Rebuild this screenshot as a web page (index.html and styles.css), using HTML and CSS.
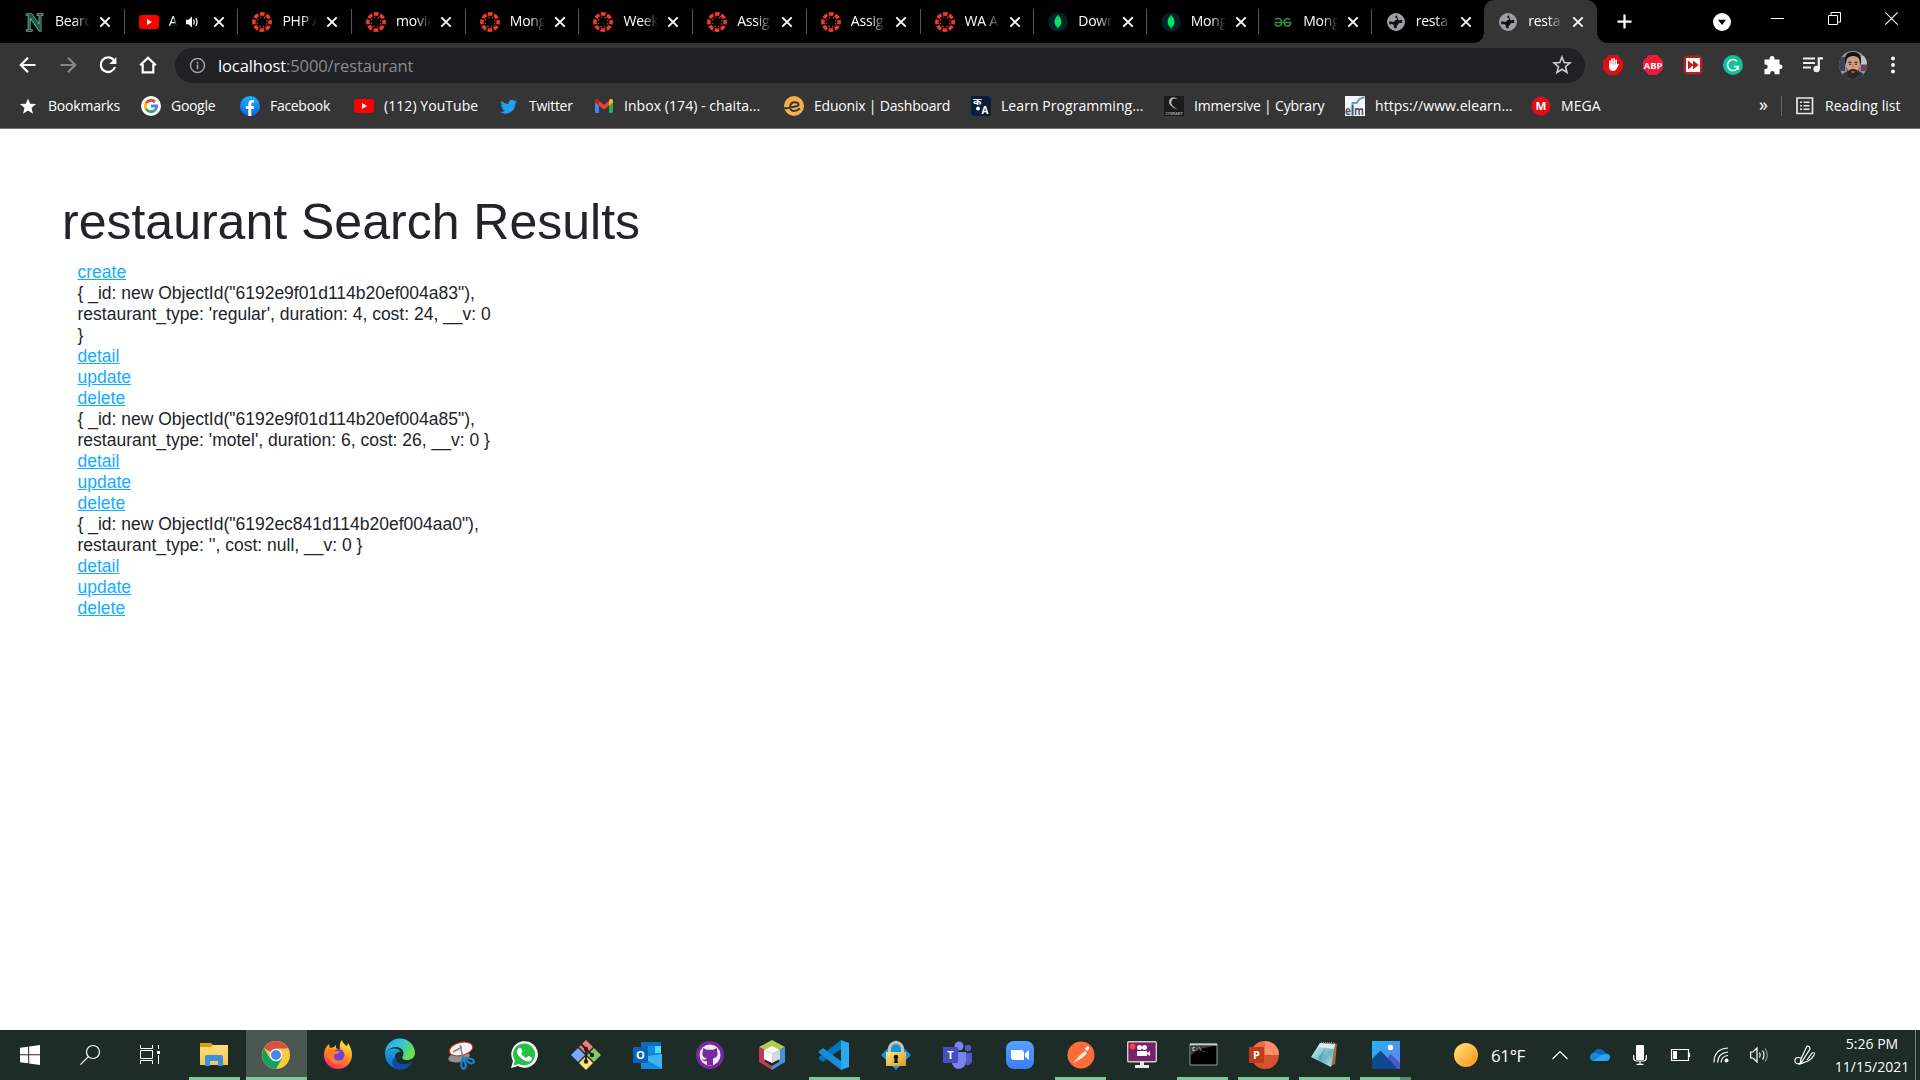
FILE: index.html
```html
<!DOCTYPE html>
<html lang="en">
<head>
<meta charset="utf-8">
<title>restaurant</title>
<link rel="stylesheet" href="styles.css">
</head>
<body>
<svg class="defs" aria-hidden="true">
  <defs>
    <linearGradient id="sun" x1="0" y1="0" x2="1" y2="1"><stop offset="0" stop-color="#ffe680"/><stop offset="1" stop-color="#ff9010"/></linearGradient>
    <linearGradient id="fox" x1=".8" y1="0" x2=".3" y2="1"><stop offset="0" stop-color="#fff04a"/><stop offset=".45" stop-color="#ff9a1e"/><stop offset="1" stop-color="#ff2468"/></linearGradient>
    <linearGradient id="edgeTop" x1="0" y1="0" x2="1" y2=".4"><stop offset="0" stop-color="#2aa5ea"/><stop offset=".5" stop-color="#2fc2df"/><stop offset="1" stop-color="#66e04c"/></linearGradient>
    <linearGradient id="edgeBody" x1="0" y1="0" x2="0" y2="1"><stop offset="0" stop-color="#1fa5e5"/><stop offset="1" stop-color="#0a63c4"/></linearGradient>
    <linearGradient id="zoomBlue" x1="0" y1="0" x2="0" y2="1"><stop offset="0" stop-color="#57a0ff"/><stop offset="1" stop-color="#3a7df8"/></linearGradient>
    <linearGradient id="photoSky" x1="0" y1="0" x2="1" y2="1"><stop offset="0" stop-color="#1cb5f2"/><stop offset="1" stop-color="#6f7ee8"/></linearGradient>
    <linearGradient id="brass" x1="0" y1="0" x2="1" y2="1"><stop offset="0" stop-color="#ffe680"/><stop offset="1" stop-color="#d59a24"/></linearGradient>
    <linearGradient id="pad" x1="0" y1="0" x2="1" y2="1"><stop offset="0" stop-color="#e6f6f6"/><stop offset=".6" stop-color="#67b6c4"/><stop offset="1" stop-color="#c9ecf0"/></linearGradient>
    <linearGradient id="fb" x1="0" y1="0" x2="0" y2="1"><stop offset="0" stop-color="#1fb0ff"/><stop offset="1" stop-color="#0a66e8"/></linearGradient>
    <linearGradient id="folder" x1="0" y1="0" x2="0" y2="1"><stop offset="0" stop-color="#ffe07a"/><stop offset="1" stop-color="#f7c64d"/></linearGradient>
    <clipPath id="avatarClip"><circle cx="14" cy="14" r="14"/></clipPath>
  </defs>
  <symbol id="x" viewBox="0 0 12 12"><path d="M1.3 1.3l9.4 9.4M10.7 1.3l-9.4 9.4" stroke="#fff" stroke-width="1.9"/></symbol>
  <symbol id="canvas" viewBox="0 0 20 20">
    <circle cx="10" cy="10" r="8.1" fill="none" stroke="#ea3b2e" stroke-width="3.6" stroke-dasharray="4.76 1.6" stroke-dashoffset="2.38"/>
    <circle cx="10" cy="10" r="4.9" fill="none" stroke="#ea3b2e" stroke-width="1.3" stroke-dasharray="1.3 2.548" stroke-dashoffset="2.57"/>
  </symbol>
  <symbol id="mongo" viewBox="0 0 20 20"><circle cx="10" cy="10" r="9.8" fill="#04202c"/><path d="M10 2.800c.8 1.600 3.400 3.400 3.400 7.100 0 3-1.800 4.600-3 5.600L10 17.600l-.4-2.100c-1.200-1-3-2.600-3-5.600 0-3.700 2.600-5.500 3.400-7.100z" fill="#00ed64"/><path d="M10 3v14" stroke="#00b04c" stroke-width=".6"/></symbol>
  <symbol id="globe" viewBox="0 0 18 18"><circle cx="9" cy="9" r="8" fill="none" stroke="#9aa0a6" stroke-width="2"/><circle cx="9" cy="9" r="8" fill="#9aa0a6"/><path class="land" d="M9.800 2.200c-1.300.4-1.800 1.300-1.500 2.100.3.900 1.600.6 1.900 1.500.2 1-.9 1.300-1.900 1.400L6.500 9 2.300 8.300c-.3 1.300-.1 2.200.2 3.200 1.200-.1 2.500-.5 3.600.1 1.100.7.300 1.900.8 2.900.6.900 2.200.8 3.300.4-1.300-1-.8-2 .1-2.500 1-.6.700-1.700 1.700-2.200 1-.500 2.300.1 3.300-.4.200-1.200 0-2.400-.5-3.300-1 .9-2.600 1-3.300.2-.7-.9-.9-2.200-1.700-4.500z"/></symbol>
  <symbol id="youtube" viewBox="0 0 20 14"><rect width="20" height="14" rx="3.200" fill="#f00"/><path d="M8 4l5 3-5 3z" fill="#fff"/></symbol>
</svg>

<header class="chrome">
  <div class="tabstrip">
    <div class="tab first"><svg class="fav" viewBox="0 0 20 20"><text class="nlogo" x="1" y="18.500" textLength="17" lengthAdjust="spacingAndGlyphs">N</text></svg><span class="ttl">Bearc</span><svg class="close"><use href="#x"/></svg></div>
    <div class="tab"><svg class="fav"><use href="#youtube" y="3" width="20" height="14"/></svg><span class="ttl short">A</span><svg class="speaker" viewBox="0 0 12 12"><path d="M0 3.700h2.500L6 .6v10.800L2.500 8.300H0z" fill="#fff"/><path d="M7.600 3.500q1.500 2.500 0 5M9.800 2q2.400 4 0 8" fill="none" stroke="#fff" stroke-width="1.300"/></svg><svg class="close"><use href="#x"/></svg></div>
    <div class="tab"><svg class="fav"><use href="#canvas"/></svg><span class="ttl">PHP A</span><svg class="close"><use href="#x"/></svg></div>
    <div class="tab"><svg class="fav"><use href="#canvas"/></svg><span class="ttl">movie</span><svg class="close"><use href="#x"/></svg></div>
    <div class="tab"><svg class="fav"><use href="#canvas"/></svg><span class="ttl">Mong</span><svg class="close"><use href="#x"/></svg></div>
    <div class="tab"><svg class="fav"><use href="#canvas"/></svg><span class="ttl">Week</span><svg class="close"><use href="#x"/></svg></div>
    <div class="tab"><svg class="fav"><use href="#canvas"/></svg><span class="ttl">Assig</span><svg class="close"><use href="#x"/></svg></div>
    <div class="tab"><svg class="fav"><use href="#canvas"/></svg><span class="ttl">Assig</span><svg class="close"><use href="#x"/></svg></div>
    <div class="tab"><svg class="fav"><use href="#canvas"/></svg><span class="ttl">WA A</span><svg class="close"><use href="#x"/></svg></div>
    <div class="tab"><svg class="fav"><use href="#mongo"/></svg><span class="ttl">Down</span><svg class="close"><use href="#x"/></svg></div>
    <div class="tab"><svg class="fav"><use href="#mongo"/></svg><span class="ttl">Mong</span><svg class="close"><use href="#x"/></svg></div>
    <div class="tab"><svg class="fav" viewBox="0 0 20 20"><path d="M2.300 8q.8-1.500 3-1.500 3.200 0 3.200 3.800t-3.200 3.800q-2.600 0-3.300-2.300M17.200 7.700q-.9-1.200-2.700-1.200-3.200 0-3.200 3.800t3.200 3.800q2.900 0 3.100-3.700M1.500 10.400h17" fill="none" stroke="#2f8d46" stroke-width="1.500"/></svg><span class="ttl">Mong</span><svg class="close"><use href="#x"/></svg></div>
    <div class="tab beforeactive"><svg class="fav globe"><use href="#globe"/></svg><span class="ttl">resta</span><svg class="close"><use href="#x"/></svg></div>
    <div class="tab active"><svg class="fav globe"><use href="#globe"/></svg><span class="ttl">resta</span><svg class="close"><use href="#x"/></svg></div>
    <svg class="newtab" viewBox="0 0 16 16"><path d="M8 .5v15M.5 8h15" stroke="#fff" stroke-width="2.400"/></svg>
    <div class="winbtns">
      <svg width="18" height="18" class="tabsearch"><circle cx="9" cy="9" r="9" fill="#fff"/><path d="M5 6.700h8L9 12z" fill="#000"/></svg>
      <svg width="13" height="13"><path d="M0 6.500h13" stroke="#fff"/></svg>
      <svg width="13" height="13"><path d="M.5 3.500h9v9h-9zM3 3V.5h9.500V10H10" fill="none" stroke="#fff"/></svg>
      <svg width="13" height="13"><path d="M.3.300l12.400 12.400M12.700.300L.3 12.700" stroke="#fff" stroke-width="1.100"/></svg>
    </div>
  </div>

  <div class="toolbar">
    <div class="nav">
      <svg viewBox="0 0 20 20"><path d="M17.500 10H3M10 2.700L2.800 10l7.200 7.300" class="ln"/></svg>
      <svg viewBox="0 0 20 20" class="dim"><path d="M2.500 10H17M10 2.700l7.200 7.300-7.200 7.300" class="ln"/></svg>
      <svg viewBox="0 0 20 20"><path d="M15.800 5.200A7.300 7.300 0 1 0 17 12" class="ln"/><path d="M18.400 2v7h-7z" fill="#fff"/></svg>
      <svg viewBox="0 0 20 20"><path d="M2.200 10.300L10 2.700l7.800 7.600M4.700 9v8.400h10.600V9" class="ln"/></svg>
    </div>
    <div class="omnibox">
      <svg class="info" viewBox="0 0 18 18"><circle cx="9" cy="9" r="7.400" fill="none" stroke="#9aa0a6" stroke-width="1.600"/><path d="M9 8v5M9 5v1.800" stroke="#9aa0a6" stroke-width="1.800"/></svg>
      <span class="url"><b>localhost</b>:5000/restaurant</span>
      <svg class="star" viewBox="0 0 20 20"><path d="M10 2l2.200 5.500 5.800.4-4.500 3.800 1.500 5.800-5-3.200-5 3.200 1.500-5.800L2 7.900l5.800-.4z" fill="none" stroke="#cfcfcf" stroke-width="1.600"/></svg>
    </div>
    <div class="exts">
      <svg viewBox="0 0 20 20"><path d="M6 0h8l6 6v8l-6 6H6l-6-6V6z" fill="#e30b13"/><path d="M7 6v6M9 4v7M11.100 3.700v7M13.200 5.200v6" stroke="#fff" stroke-width="1.600" stroke-linecap="round"/><path d="M6.200 9.500H14l1.500-.8q.8.300.3 1.300L13.500 14q-1 2-3.500 2-3.800 0-3.800-4z" fill="#fff"/></svg>
      <svg viewBox="0 0 20 20"><path d="M6 0h8l6 6v8l-6 6H6l-6-6V6z" fill="#ee1b3b"/><text class="abp" x=".8" y="13.600" textLength="18.400" lengthAdjust="spacingAndGlyphs">ABP</text></svg>
      <svg viewBox="0 0 20 20"><rect x=".5" y=".5" width="19" height="19" rx="4" fill="#b52020"/><rect x="3" y="3" width="14" height="14" rx="1" fill="#fff"/><path d="M5 5.500l5.500 4.500L5 14.500zM10 5.500l5.700 4.500-5.700 4.500z" fill="#c01a1a"/></svg>
      <svg viewBox="0 0 20 20"><circle cx="10" cy="10" r="10" fill="#11c298"/><path d="M14 6.300A5.500 5.500 0 1 0 15.300 11.500H11M15.300 11v4" fill="none" stroke="#fff" stroke-width="1.500"/></svg>
      <svg viewBox="0 0 20 20"><path d="M1.500 4.500h5.200V3.300a2.400 2.400 0 0 1 4.800 0v1.200h5v5h.7a2.300 2.300 0 0 1 0 4.700h-.7v5h-4.900v-1a2.200 2.200 0 0 0-4.400 0v1H1.500V14h1a2.200 2.200 0 0 0 0-4.500h-1z" fill="#fff"/></svg>
      <svg viewBox="0 0 20 20"><path d="M0 3.500h12M0 8h12M0 12.500h8" stroke="#eee" stroke-width="2"/><path d="M15.800 14V3.400H20" fill="none" stroke="#eee" stroke-width="2.200"/><circle cx="13.600" cy="14" r="3.200" fill="#eee"/></svg>
      <svg class="avatar" viewBox="0 0 28 28"><g clip-path="url(#avatarClip)"><path d="M0 0h28v28H0z" fill="#8e909c"/><path d="M0 6h6v14H0z" fill="#34465a"/><path d="M22 5h6v8h-6z" fill="#c5bec7"/><path d="M22 14h6v6h-6z" fill="#763e52"/><path d="M2 28q1-7 8-8h9q6 1 7 8z" fill="#233448"/><path d="M7.500 8Q8 3.500 14 3.500T20.500 8v11q-2 6-6.500 6t-6.500-6z" fill="#cf9f82"/><path d="M6.300 14Q4 1 14 1t7.700 13l-1.500-6q-2-3-6-3T7.800 8z" fill="#16100f"/><path d="M7.300 15l1 7q2 5.500 5.700 5.500t5.700-5.500l1-7-1.700 5.500q-1-2.500-5-2.500t-5 2.500z" fill="#33211b"/><path d="M11.500 20.800q2.500-1 5 0-2.500 2-5 0z" fill="#bd8270"/><path d="M9.300 11.300h3.200M15.500 11.300h3.200" stroke="#22130f"/><circle cx="11" cy="13.300" r=".8" fill="#22130f"/><circle cx="17" cy="13.300" r=".8" fill="#22130f"/><path d="M14 13v3.500" stroke="#a9775d"/></g></svg>
      <svg viewBox="0 0 20 20"><circle cx="10" cy="3.500" r="1.900" fill="#fff"/><circle cx="10" cy="10" r="1.900" fill="#fff"/><circle cx="10" cy="16.500" r="1.900" fill="#fff"/></svg>
    </div>
  </div>

  <div class="bookmarks">
    <div class="bm starred"><svg viewBox="0 0 20 20"><path d="M8 2.500l2.100 5.200 5.900.4-4.500 3.800 1.500 5.800-5-3.200-5 3.200 1.500-5.800L0 8.100l5.900-.4z" fill="#fff"/></svg><span>Bookmarks</span></div>
    <div class="bm"><svg viewBox="0 0 20 20"><circle cx="10" cy="10" r="10" fill="#fff"/><g fill="none" stroke-width="2.800"><path d="M14 5.900A5.700 5.700 0 0 0 5.100 7.100" stroke="#ea4335"/><path d="M5.100 7.100a5.700 5.700 0 0 0 0 5.800" stroke="#fbbc05"/><path d="M5.100 12.900a5.700 5.700 0 0 0 8.700 1.300" stroke="#34a853"/><path d="M13.800 14.200A5.500 5.500 0 0 0 15.700 10H10" stroke="#4285f4"/></g></svg><span>Google</span></div>
    <div class="bm"><svg viewBox="0 0 20 20"><circle cx="10" cy="10" r="10" fill="url(#fb)"/><path d="M8.300 20v-7H5.800v-3h2.500V7.900c0-2.600 1.500-4 3.900-4 .9 0 1.900.2 1.900.2v2.500h-1.200c-1.300 0-1.600.8-1.600 1.600V10h2.800l-.5 3h-2.300v7z" fill="#fff"/></svg><span>Facebook</span></div>
    <div class="bm loose"><svg><use href="#youtube" y="3" width="20" height="14"/></svg><span>(112) YouTube</span></div>
    <div class="bm"><svg viewBox="0 0 24 24"><path fill="#1da1f2" d="M21.500 6.500c-.7.300-1.500.5-2.300.6.800-.5 1.500-1.300 1.800-2.200-.8.500-1.700.8-2.600 1a4.100 4.100 0 0 0-7 3.700C8 9.500 5 7.900 3 5.400c-1.100 1.900-.5 4.300 1.300 5.500-.7 0-1.300-.2-1.900-.5 0 2 1.400 3.700 3.300 4.100-.6.200-1.200.2-1.900.1.500 1.600 2 2.800 3.900 2.900A8.300 8.300 0 0 1 1.600 19.200 11.600 11.600 0 0 0 19.500 8.900c.8-.6 1.500-1.300 2-2.400z"/></svg><span>Twitter</span></div>
    <div class="bm loose mail"><svg viewBox="0 0 20 20"><path d="M0 5v10.500q0 1.500 1.500 1.500H4V9z" fill="#4285f4"/><path d="M18 5v10.500q0 1.500-1.500 1.500H14V9z" fill="#34a853"/><path d="M14 5.500V9.500L18 6.500V5c0-2-2.200-2.500-3.500-1.500z" fill="#fbbc04"/><path d="M4 5l5 3.800L14 5v4.700l-5 3.800-5-3.800z" fill="#ea4335"/><path d="M0 5c0-2 2-2.500 3.500-1.500L4 4v5.500L0 6.500z" fill="#c5221f"/></svg><span>Inbox (174) - chaita...</span></div>
    <div class="bm mid"><svg viewBox="0 0 20 20"><circle cx="10" cy="10" r="10" fill="#f7ae49"/><path d="M0 12.300h1.500q1.500 0 3-.5l8-1.500c3.500-.8 2.500-4-2-4-5 0-6.500 8.700-.5 8.700 3 0 4-.7 6-2.500" fill="none" stroke="#353535" stroke-width="1.900"/></svg><span>Eduonix | Dashboard</span></div>
    <div class="bm loose"><svg viewBox="0 0 20 20"><path d="M0 0h16q4 0 4 4v16H4q-4 0-4-4z" fill="#0a1e3b"/><text class="glyph" x="2" y="9" font-size="10">क</text><circle cx="7" cy="12.500" r="1.900" fill="#fff"/><text class="glyph" x="10.500" y="18" font-size="10">A</text></svg><span>Learn Programming...</span></div>
    <div class="bm mid"><svg viewBox="0 0 20 20"><path d="M0 0h20v20H0z" fill="#1b1b1b"/><path d="M14.500 3.500Q8-1 5.200 4q-1.800 6 8.300 9.500Q6 9.500 7.500 5 9 1 14.500 3.500z" fill="#bbb"/><text class="cy" x="1.500" y="18.500" textLength="17">CYBRARY</text></svg><span>Immersive | Cybrary</span></div>
    <div class="bm loose"><svg viewBox="0 0 20 20"><path d="M0 0h20v20H0z" fill="#f4f6fa"/><path d="M7.500 20V7h4l3-4 5-2" fill="none" stroke="#7398cf" stroke-width="2"/><text class="elm" x="0" y="18.500" textLength="19" lengthAdjust="spacingAndGlyphs">elm</text></svg><span>https://www.elearn...</span></div>
    <div class="bm loose"><svg viewBox="0 0 20 20"><circle cx="10" cy="10" r="9.500" fill="#e10d17"/><text class="mega" x="4.500" y="14" textLength="11" lengthAdjust="spacingAndGlyphs">M</text></svg><span>MEGA</span></div>
    <span class="more">»</span>
    <div class="bm loose reading"><svg viewBox="0 0 20 20"><path d="M2 2h15.500v15.500H2z" fill="none" stroke="#e8e8e8" stroke-width="1.700"/><path d="M5 6.300h2M8.500 6.300h6M5 9.700h2M8.500 9.700h6M5 13.200h2M8.500 13.200h6" stroke="#e8e8e8" stroke-width="1.500"/></svg><span>Reading list</span></div>
  </div>
</header>

<main class="page">
  <h1>restaurant Search Results</h1>
  <div class="results">
    <a href="#">create</a>
    <p>{ _id: new ObjectId("6192e9f01d114b20ef004a83"),<br>restaurant_type: 'regular', duration: 4, cost: 24, __v: 0<br>}</p>
    <a href="#">detail</a><a href="#">update</a><a href="#">delete</a>
    <p>{ _id: new ObjectId("6192e9f01d114b20ef004a85"),<br>restaurant_type: 'motel', duration: 6, cost: 26, __v: 0 }</p>
    <a href="#">detail</a><a href="#">update</a><a href="#">delete</a>
    <p>{ _id: new ObjectId("6192ec841d114b20ef004aa0"),<br>restaurant_type: '', cost: null, __v: 0 }</p>
    <a href="#">detail</a><a href="#">update</a><a href="#">delete</a>
  </div>
</main>

<footer class="taskbar">
  <div class="system">
    <svg width="20" height="20"><path d="M0 2.800L8.200 1.700v7.600H0zM9.200 1.500L20 0v9.300H9.200zM0 10.300h8.200v7.900L0 17.200zM9.200 10.300H20V20L9.200 18.500z" fill="#fff"/></svg>
    <svg width="20" height="20"><circle cx="13" cy="7" r="6.500" fill="none" stroke="#fff" stroke-width="1.200"/><path d="M8.400 11.600L.4 19.600" stroke="#fff" stroke-width="1.300"/></svg>
    <svg width="20" height="20"><path d="M.5 0v3.500h12V0M.5 19v-3.500h12V19M.5 5.500h12v8H.5zM18.500 0v4M18.500 10v9" fill="none" stroke="#fff"/><path d="M17 6h3v3h-3z" fill="#fff"/></svg>
  </div>
  <div class="apps">
    <div class="app run"><svg viewBox="0 0 30 30"><path d="M1 3h11l2 2v3H1z" fill="#e09a06"/><path d="M1 7h11l2-2h15v20H1z" fill="url(#folder)"/><path d="M6 26V17q0-2 2-2h14q2 0 2 2v9h-5v-5h-8v5z" fill="#3992dc"/></svg></div>
    <div class="app run current"><svg viewBox="0 0 30 30"><circle cx="15" cy="15" r="14" fill="#fbc93c"/><path d="M15 15L2.900 8A14 14 0 0 1 27.100 8z" fill="#d94f44"/><path d="M2.900 8A14 14 0 0 0 14.900 29L21 18.500 15 15 9 18.500z" fill="#16a05d"/><path d="M15 8.500h12.400L21 19z" fill="#fbc93c"/><circle cx="15" cy="15" r="6.300" fill="#fff"/><circle cx="15" cy="15" r="5" fill="#4587f3"/></svg></div>
    <div class="app"><svg viewBox="0 0 30 30"><path d="M1 15Q1 8 6 4l1 4 4-1 2-2 0 3 4 2q-1-7 2-10 1 4 5 6l1-3q4 6 4 12a14 14 0 0 1-28 0z" fill="url(#fox)"/><circle cx="15.500" cy="15" r="6" fill="#7441d4"/><path d="M4 9q5-1 7 2h6q-1 3-5 3-3 3 1 6 5 2 8-1-3 7-10 5-7-3-6-15z" fill="#ff7b20"/></svg></div>
    <div class="app"><svg viewBox="0 0 30 30"><path d="M0 14A15 15 0 0 1 30 13c0 5-4 7-8 7-3 0-6-1-4-4 2-5-2-9-7-9-5 0-9 3-11 7z" fill="url(#edgeTop)"/><path d="M0 14c2-6 13-8 16-2-5-1-7 4-6 8 1 5 6 9 11 8A15 15 0 0 1 0 14z" fill="url(#edgeBody)"/><path d="M11 17c-1 7 8 10 17 4-3 6-8 9-14 9-8-2-9-11-3-13z" fill="#124b9e"/></svg></div>
    <div class="app"><svg viewBox="0 0 30 30"><ellipse cx="12" cy="17" rx="11" ry="5" fill="#929292" transform="rotate(-12 12 17)"/><ellipse cx="14" cy="9" rx="12" ry="6.500" fill="#f4f4f4" stroke="#d32020" transform="rotate(-14 14 9)"/><path d="M6 12l9-5M13 5l3 13 6-1" stroke="#888" fill="none" stroke-width="1.500"/><path d="M16 18q-3 6-1 10 3 2 4-3zM17 18q10 0 10 4-2 3-6 0z" fill="none" stroke="#2380bd" stroke-width="2.200"/></svg></div>
    <div class="app"><svg viewBox="0 0 30 30"><path d="M2 28l2-7A13.300 13.300 0 1 1 9 26z" fill="#fff"/><path d="M4.500 25.500l1.400-5A11 11 0 1 1 9.700 24z" fill="#27c044"/><path d="M9 9q2-3 3.500 0l1 2.500-1.300 2q2 3.500 5 4.500l1.800-2q4 1.200 4 2.200c-1 4-4.500 3.800-8.500 1.800C10 17 8 13.500 8 12q0-1.500 1-3z" fill="#fff"/></svg></div>
    <div class="app"><svg viewBox="0 0 30 30"><path d="M15 0l7 7-7 7-7-7z" fill="#f77b7b"/><path d="M7 8l7 7-7 7-7-7z" fill="#7ba9f9"/><path d="M23 8l7 7-7 7-7-7z" fill="#82ca5a"/><path d="M15 16l7 7-7 7-7-7z" fill="#ffe178"/><path d="M10 4l5 5v13M15 9l6 6" fill="none" stroke="#2b2320" stroke-width="2"/><circle cx="15" cy="9" r="2.200" fill="#2b2320"/><circle cx="15" cy="21.500" r="2.200" fill="#2b2320"/><circle cx="21" cy="15" r="2.200" fill="#2b2320"/></svg></div>
    <div class="app"><svg viewBox="0 0 30 30"><path d="M8 2h20v9H8z" fill="#0f6cbd"/><path d="M15 6h7v7h-7z" fill="#148ade"/><path d="M22 6h6v7h-6z" fill="#50d9ff"/><path d="M8 13h20l1 16H8z" fill="#1480d8"/><path d="M8 17l21 12V14z" fill="#3db5f1"/><path d="M8 17l21 12H8z" fill="#1689df"/><rect x="0" y="7" width="15" height="16" rx="1" fill="#0a63b8"/><text class="office" x="7.500" y="19">O</text></svg></div>
    <div class="app"><svg viewBox="0 0 30 30"><circle cx="15" cy="15" r="14" fill="#772a9e"/><circle cx="15" cy="15" r="10.500" fill="#f1e8f6"/><path d="M12 25v-4q-3.500 1-5-2 3 1.500 5-.5Q6 17 7.700 12l.6-4 3.400 1.800h6.600L21.700 8l.6 4q1.700 5-4.300 6.500V25z" fill="#772a9e"/></svg></div>
    <div class="app"><svg viewBox="0 0 30 30"><path d="M15 0l13 7-13 7L2 7z" fill="#b2ca4e"/><path d="M2 7l6 3v12l7 4v4L2 22z" fill="#be3b58"/><path d="M28 7l-6 3v12l-7 4v4l13-8z" fill="#4b8fd8"/><path d="M15 6l8 4-8 4-8-4z" fill="#f5f5ef"/><path d="M7 10l8 4v9l-8-4z" fill="#fff"/><path d="M23 10l-8 4v9l8-4z" fill="#d5d9dc"/></svg></div>
    <div class="app run"><svg viewBox="0 0 30 30"><path d="M22 0v9L4 22l-4-3v-2z" fill="#0076b9"/><path d="M4 8l18 13v9L0 13v-2z" fill="#168dd5"/><path d="M22 0l8 3v24l-8 3z" fill="#2ba7f3"/></svg></div>
    <div class="app"><svg viewBox="0 0 30 30"><path d="M15 0l15 15-15 15L0 15z" fill="#1792dd"/><path d="M8.500 14V9a6.500 6.500 0 0 1 13 0v5" fill="none" stroke="#c8c4b8" stroke-width="3"/><rect x="5" y="12" width="20" height="14" rx="1" fill="url(#brass)"/><circle cx="15" cy="17" r="2.300" fill="#1b1508"/><path d="M14 17h2l1 6h-4z" fill="#1b1508"/></svg></div>
    <div class="app"><svg viewBox="0 0 30 30"><circle cx="16" cy="6" r="4.500" fill="#7b83eb"/><circle cx="25" cy="8" r="3.200" fill="#5059c9"/><path d="M20 13h9v8q-1 5-6 4z" fill="#5059c9"/><path d="M9 12h14v10q-1 7-8 7-5-1-6-6z" fill="#7b83eb"/><rect x="0" y="7" width="15" height="16" rx="1" fill="#454ebb"/><text class="office" x="7.500" y="19">T</text></svg></div>
    <div class="app"><svg viewBox="0 0 30 30"><rect x="1" y="1" width="28" height="28" rx="8" fill="url(#zoomBlue)"/><path d="M6 10h10q3 0 3 3v7H9q-3 0-3-3zM20 13.500l4-3.500v10l-4-3.500z" fill="#fff"/></svg></div>
    <div class="app run"><svg viewBox="0 0 30 30"><circle cx="15" cy="15" r="13.500" fill="#ff6c37"/><path d="M7 23l8-9 4-3 2 2-5 5zM19 9q2-4 4-2 1 2-2 4z" fill="#fff"/><path d="M8 22.500l11-11" stroke="#ffc4ac"/></svg></div>
    <div class="app"><svg viewBox="0 0 30 30"><rect x=".7" y="1.700" width="28.600" height="20" rx="1" fill="#77206b" stroke="#ccc" stroke-width="1.400"/><circle cx="5.500" cy="6.500" r="3" fill="#ff3a40"/><path d="M10 11h10v5H10zM20 13l3-2v5l-3-2z" fill="#fff"/><circle cx="12.500" cy="7.500" r="2.500" fill="#fff"/><circle cx="17.500" cy="7.500" r="2.500" fill="#fff"/><path d="M13 22h4v3h5v3H8v-3h5z" fill="#e8e8e8"/></svg></div>
    <div class="app run"><svg viewBox="0 0 30 30"><path d="M2 4h27v21H2z" fill="#000" stroke="#929ba0"/><path d="M2 3.500h27v2H2z" fill="#c9d1d5"/><path d="M3 6h25q-20 2-25 10z" fill="#3c3c3c"/><text class="cmd" x="4" y="11">C:\_</text></svg></div>
    <div class="app run"><svg viewBox="0 0 30 30"><circle cx="16" cy="15" r="14" fill="#d35230"/><path d="M16 1a14 14 0 0 1 14 14H16z" fill="#ff8f6b"/><path d="M16 1v14h-9L4 7q5-6 12-6z" fill="#ed6c47"/><rect x="0" y="7" width="15" height="16" rx="1" fill="#c13b1b"/><text class="office" x="7.500" y="19">P</text></svg></div>
    <div class="app run"><svg viewBox="0 0 30 30"><path d="M24 3l3 1-2 20-4 2z" fill="#a3702d"/><path d="M10 3l15 1-4 23L1 17z" fill="url(#pad)"/><path d="M10 3l15 1-1 5-16-2z" fill="#dceced"/><path d="M11 2.500l13 1" stroke="#888" stroke-width="2" stroke-dasharray="1 1"/><path d="M8 18l8-11-5 13z" fill="#398b9b" opacity=".5"/></svg></div>
    <div class="app run multi"><svg viewBox="0 0 30 30"><path d="M1 1h28v28H1z" fill="url(#photoSky)"/><circle cx="19.500" cy="7.500" r="2.700" fill="#fff"/><path d="M17 17l3-3 9 9v6H17z" fill="#4c59c4"/><path d="M1 19l8-8h1l17 18H1z" fill="#10498f"/></svg></div>
  </div>
  <div class="tray">
    <svg class="sun" width="24" height="24"><circle cx="12" cy="12" r="12" fill="url(#sun)"/></svg>
    <span class="temp">61°F</span>
    <div class="trayicons">
      <svg width="16" height="10"><path d="M.5 9L8 1.500 15.500 9" class="thin"/></svg>
      <svg width="20" height="14"><path d="M1 11A5 5 0 0 1 4 4Q7-1 12 1.500 15 3 15.500 5 20 5 20 10z" fill="#0b65bd"/><path d="M0 9q1-5 7-4l9 5-4 3H4q-4 0-4-4z" fill="#1688dc"/><path d="M3 13l8-6q8-3 9 2 0 4-4 4z" fill="#2aa7ec"/></svg>
      <svg width="14" height="20"><rect x="3" y="0" width="8" height="15" rx="1" fill="#fff"/><path d="M.7 10v3q0 3 3 3h6.600q3 0 3-3v-3M7 16v3.300M3.500 19.400h7" class="thin"/></svg>
      <svg width="19" height="12"><path d="M.5.500h17v11H.5zM18.500 4v4" class="thin"/><path d="M2 2h4v8H2z" fill="#fff"/></svg>
      <svg width="16" height="16"><path d="M1 15.500Q1 2 15 1M4.500 15.500Q5 6 15 5M8 15.500Q8.500 9 15 8.500" class="thin"/><circle cx="13.500" cy="13.500" r="2" fill="#fff"/></svg>
      <svg width="21" height="18"><path d="M.6 6H3l4-4v14l-4-4H.600zM9.500 6.500q1.500 2.500 0 5M12.500 4.500q3 4.500 0 9" class="thin"/><path d="M15 2.500q4.500 6.500 0 13" class="thin faint"/></svg>
      <svg width="22" height="20"><path d="M7 13q-7-2-6 4 2 3 6 1l9-14q0-3-3-3L7 14l-1 5 8-3q4-2 6-6 2-3-2-2l-5 7" class="thin"/></svg>
    </div>
    <div class="clock"><span>5:26 PM</span><span>11/15/2021</span></div>
  </div>
</footer>
</body>
</html>
```
FILE: styles.css
```css
* { box-sizing: border-box; }
body {
  margin: 0;
  width: 1920px;
  height: 1080px;
  overflow: hidden;
  display: flex;
  flex-direction: column;
  background: #fff;
  font-family: "Open Sans", "Noto Sans", sans-serif;
}
.defs { position: absolute; width: 0; height: 0; }
svg { flex: none; display: block; overflow: visible; }

.chrome { height: 129px; background: #353535; border-bottom: 1px solid #757575; color: #fff; }

/* Tab strip */
.tabstrip { height: 43px; background: #000; display: flex; align-items: center; padding-left: 11px; }
.tab {
  width: 113.700px;
  height: 25px;
  display: flex;
  align-items: center;
  padding-left: 14px;
  border-right: 1px solid #555;
  flex: none;
}
.tab:nth-child(n+10) { width: 112.500px; }
.fav { width: 20px; height: 20px; margin-right: 10px; }
.fav.globe { width: 18px; height: 18px; margin: 0 11px 0 1px; }
.land { fill: #111; }
.ttl {
  width: 35px;
  white-space: nowrap;
  font-size: 14px;
  line-height: 20px;
  padding-bottom: 2px;
  letter-spacing: -0.200px;
  -webkit-mask-image: linear-gradient(90deg, #000 55%, transparent);
  mask-image: linear-gradient(90deg, #000 55%, transparent);
}
.ttl.short { width: 8px; }
.speaker { width: 12px; height: 12px; margin: 0 5px 0 9px; }
.close { width: 12px; height: 12px; margin-left: 9px; }
.speaker + .close { margin-left: 10px; }
.tab.beforeactive { border-color: transparent; }
.tab.active {
  height: 43px;
  background: #353535;
  border: 0;
  border-radius: 10px 10px 0 0;
  position: relative;
}
.tab.active::before, .tab.active::after {
  content: "";
  position: absolute;
  bottom: 0;
  width: 10px;
  height: 10px;
}
.tab.active::before { left: -10px; background: radial-gradient(circle at 0 0, #000 9.500px, #353535 10px); }
.tab.active::after { right: -10px; background: radial-gradient(circle at 100% 0, #000 9.500px, #353535 10px); }
.tab.active .land { fill: #353535; }
.newtab { width: 15px; height: 15px; margin-left: 20px; }
.winbtns { margin-left: auto; padding: 0 22px 6px 0; display: flex; align-items: center; gap: 44px; height: 43px; }
.tabsearch { margin: 6px -4px 0 0; }

/* Toolbar */
.toolbar { height: 44px; display: flex; align-items: center; }
.nav { display: flex; gap: 20px; padding-left: 17.500px; width: 175px; }
.nav svg { width: 20px; height: 20px; }
.ln { fill: none; stroke: #fff; stroke-width: 2.200; }
.dim { opacity: .4; }
.omnibox {
  width: 1410px;
  height: 35px;
  border-radius: 18px;
  background: #202124;
  display: flex;
  align-items: center;
  padding: 0 13px 0 14px;
}
.info { width: 17px; height: 17px; }
.url { margin-left: 12px; color: #8b8b8b; font-size: 16.500px; letter-spacing: -0.120px; }
.url b { font-weight: 400; color: #fff; }
.star { width: 20px; height: 20px; margin-left: auto; }
.exts { display: flex; align-items: center; gap: 20px; padding-left: 18px; }
.exts svg { width: 20px; height: 20px; }
.exts .avatar { width: 28px; height: 28px; margin: 0 -4px; }

/* Bookmarks bar */
.bookmarks {
  height: 37px;
  display: grid;
  align-items: center;
  padding-left: 20px;
  grid-template-columns: 121px 99px 114px 145px 96px 189px 187px 193px 181px 186px 228px 22px 1fr;
}
.bm { display: flex; align-items: center; font-size: 14px; white-space: nowrap; letter-spacing: -0.300px; }
.bm svg { width: 20px; height: 20px; margin-right: 10px; }
.bm.mid { letter-spacing: -0.200px; }
.bm.loose { letter-spacing: 0.060px; }
.bm.starred { letter-spacing: -0.200px; }
.bm.starred svg { margin-right: 8px; }
.bm.mail svg { margin-right: 9px; }
.more { font-size: 18px; line-height: 20px; padding-bottom: 3px; }
.reading { height: 20px; border-left: 1px solid #666; padding-left: 13px; }

/* Page */
.page { flex: 1; padding: 63px 62px 0; color: #212529; font-family: "Liberation Sans", Arial, sans-serif; }
.page h1 { margin: 0 0 10px; font-size: 50px; font-weight: 400; line-height: 60px; color: #212529; }
.results { display: flex; flex-direction: column; align-items: flex-start; padding-left: 15.500px; font-size: 17.500px; line-height: 21px; }
.results p { margin: 0; white-space: nowrap; }
.results a { color: #12adff; text-decoration: underline; }

/* Taskbar */
.taskbar { height: 50px; background: #1d2c27; display: flex; color: #fff; }
.system { width: 183px; display: flex; align-items: center; gap: 40px; padding-left: 20px; }
.apps { display: grid; grid-template-columns: repeat(13, 62px) repeat(7, 61px); }
.app { display: flex; align-items: center; justify-content: center; background-repeat: no-repeat; }
.app svg { width: 30px; height: 30px; }
.run { background-image: linear-gradient(#7bc99b, #7bc99b); background-size: 51px 3px; background-position: 50% 100%; }
.current { background-color: #4a5753; background-size: 100% 3px; margin-left: 1px; }
.current svg { margin-right: 1px; }
.multi { background-image: linear-gradient(90deg, #7bc99b 40px, #568c6e 40px); }
.tray { margin-left: auto; display: flex; align-items: center; width: 466px; }
.temp { width: 35px; margin: 0 26px 0 13px; font-size: 17px; letter-spacing: -0.400px; }
.trayicons { display: grid; grid-template-columns: 38px 43px 38px 42px 37px 44px 35px; align-items: center; }
.clock {
  width: 87px;
  height: 50px;
  border-right: 1px solid #78827e;
  display: flex;
  flex-direction: column;
  align-items: center;
  padding-top: 2px;
  font-size: 14px;
  line-height: 23px;
}
.thin { fill: none; stroke: #fff; stroke-width: 1.200; }
.faint { opacity: .5; }

/* Lettering inside logos */
text { font-family: "Open Sans", "Noto Sans", sans-serif; font-weight: 700; fill: #fff; }
.nlogo { font-family: "Liberation Serif", serif; font-size: 25px; fill: #006747; stroke: #b9c9c1; stroke-width: 1.200; paint-order: stroke; }
.abp { font-size: 9.500px; }
.glyph { font-family: "Noto Sans", "DejaVu Sans", sans-serif; }
.cy { font-size: 4px; fill: #999; }
.elm { font-size: 13px; fill: #4d555e; }
.mega { font-size: 11px; }
.office { font-size: 11px; text-anchor: middle; }
.cmd { font-size: 5.500px; font-family: "Liberation Mono", monospace; fill: #ddd; }
```
